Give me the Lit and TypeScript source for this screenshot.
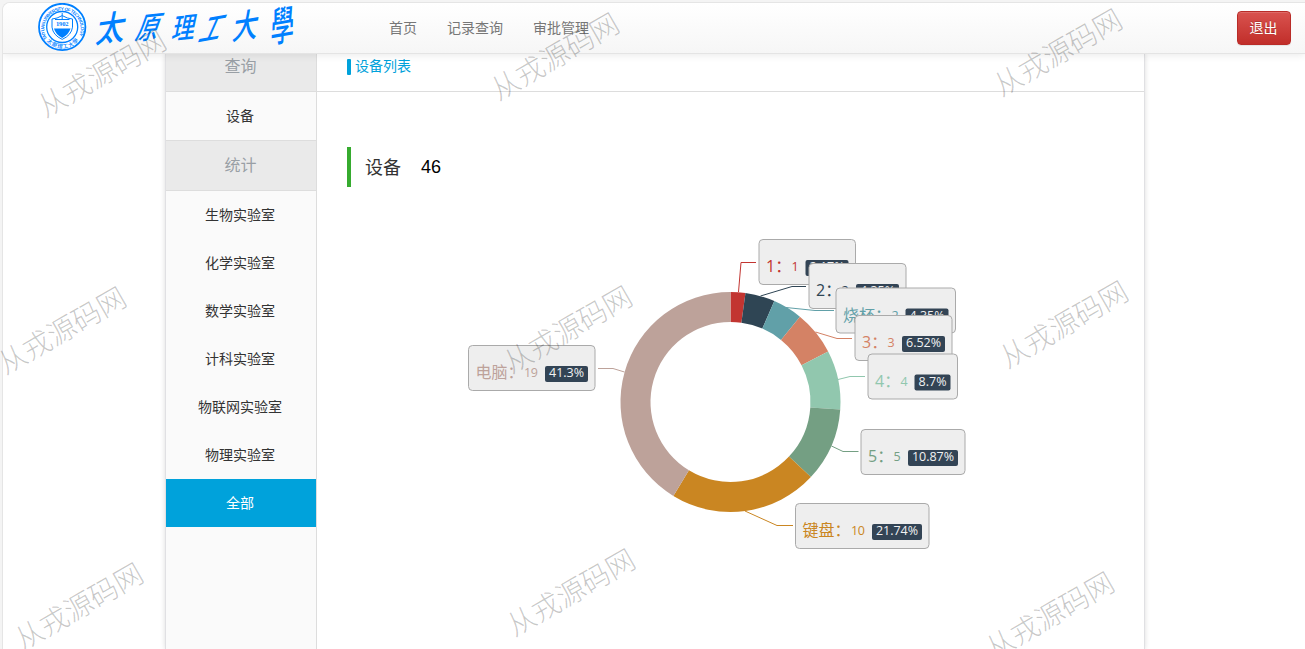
import { LitElement, html, svg, css } from "lit";
import { customElement } from "lit/decorators.js";
import { classMap } from "lit/directives/class-map.js";

interface Slice {
  name: string;
  value: number;
  pct: string;
  color: string;
  box: [number, number, number];
  badge: number;
  line: string;
}

const SLICES: Slice[] = [
  { name: "1", value: 1, pct: "2.17%", color: "#c23531", box: [759, 239.5, 96.5], badge: 43, line: "738.5,292 741,262.5 756,262.5" },
  { name: "2", value: 2, pct: "4.35%", color: "#2f4554", box: [809, 263.5, 97], badge: 43, line: "760.5,296 792,286.5 806,286.5" },
  { name: "烧杯", value: 2, pct: "4.35%", color: "#61a0a8", box: [836, 288, 119.5], badge: 43, line: "786,307.5 815,310.5 834,310.5" },
  { name: "3", value: 3, pct: "6.52%", color: "#d48265", box: [855, 315.5, 97], badge: 43, line: "815.5,332 837,338.5 852,338.5" },
  { name: "4", value: 4, pct: "8.7%", color: "#91c7ae", box: [868, 354, 89.5], badge: 36, line: "838,379.5 850,376.5 865,376.5" },
  { name: "5", value: 5, pct: "10.87%", color: "#749f83", box: [861, 429.5, 104], badge: 50, line: "831.5,446 843,451.5 858.5,451.5" },
  { name: "键盘", value: 10, pct: "21.74%", color: "#ca8622", box: [795.5, 503.5, 133.5], badge: 50, line: "745,511 777,525.5 793,525.5" },
  { name: "电脑", value: 19, pct: "41.3%", color: "#bda29a", box: [468.5, 345.5, 126.5], badge: 43, line: "624.5,372 613,368.5 598,368.5" },
];

const TOTAL = SLICES.reduce((sum, s) => sum + s.value, 0);
const CX = 730.5;
const CY = 402;

function arcPath(from: number, to: number, outer: number, inner: number): string {
  const point = (t: number, r: number) => {
    const a = t * Math.PI * 2;
    return `${(CX + Math.sin(a) * r).toFixed(2)} ${(CY - Math.cos(a) * r).toFixed(2)}`;
  };
  const large = to - from > 0.5 ? 1 : 0;
  return `M${point(from, outer)}A${outer} ${outer} 0 ${large} 1 ${point(to, outer)}L${point(to, inner)}A${inner} ${inner} 0 ${large} 0 ${point(from, inner)}Z`;
}

@customElement("donut-chart")
class DonutChart extends LitElement {
  static styles = css`
    :host { display: block; }
    svg { display: block; }
    text { font-family: "Open Sans", "Noto Sans CJK SC", sans-serif; }
    .name { font-size: 16px; }
    .value { font-size: 12.5px; }
    .pct { font-size: 12.5px; font-weight: 500; fill: #f2f2f2; }
  `;

  render() {
    let sum = 0;
    return html`<svg width="827" height="462" viewBox="317 187 827 462">
      ${SLICES.map((s) => {
        const from = sum / TOTAL;
        sum += s.value;
        return svg`<path d=${arcPath(from, sum / TOTAL, 110, 80)} fill=${s.color}></path>`;
      })}
      ${SLICES.map((s) => svg`<polyline points=${s.line} fill="none" stroke=${s.color}></polyline>`)}
      ${SLICES.map((s) => {
        const [x, y, w] = s.box;
        const badgeX = x + w - 7 - s.badge;
        const digits = String(s.value).length;
        const nameEnd = x + 7.5 + (s.name.length === 2 ? 48 : 25);
        return svg`
          <rect x=${x} y=${y} width=${w} height="45" rx="4" fill="#eee" stroke="#aaa"></rect>
          <text class="name" x=${x + 7} y=${y + 32.5} fill=${s.color}>${s.name + "\uff1a"}</text>
          <text class="value" x=${nameEnd} y=${y + 31.5} fill=${s.color} textLength=${digits * 7}>${s.value}</text>
          <rect x=${badgeX} y=${y + 20.5} width=${s.badge} height="16" rx="2" fill="#334455"></rect>
          <text class="pct" x=${badgeX + 4} y=${y + 31.5} textLength=${s.badge - 8}>${s.pct}</text>`;
      })}
    </svg>`;
  }
}

@customElement("school-logo")
class SchoolLogo extends LitElement {
  static styles = css`
    :host { display: block; }
    svg { display: block; }
    .ring { font: 700 4.6px "Liberation Sans", sans-serif; fill: #0080ff; }
    .cn { font: 500 5.5px "Noto Sans CJK SC", sans-serif; fill: #0080ff; }
    .year { font: 700 6.5px "Liberation Serif", serif; fill: #0080ff; }
    .brush { font-family: "Noto Sans CJK SC", sans-serif; font-weight: 500; fill: #0080ff; }
  `;

  render() {
    const strokes: [string, number, number, string, number][] = [
      ["太", 111.5, 28, "rotate(-8) skewX(-18) scale(.86 1)", 34],
      ["原", 149.5, 27, "rotate(-6) skewX(-26) scale(.74 .96)", 31],
      ["理", 184.5, 27.5, "rotate(-6) skewX(-18) scale(.8 .98)", 29],
      ["工", 213, 28, "rotate(-10) skewX(-34) scale(.7 .96)", 31],
      ["大", 246, 25.5, "rotate(-9) skewX(-18) scale(.8 1.02)", 32],
      ["學", 282.5, 25.5, "rotate(-10) skewX(-12) scale(.7 1.18)", 34],
    ];
    return html`<svg width="265" height="50" viewBox="35 3 265 50">
      <defs>
        <path id="top" d="M47.2 38.8A18.3 18.3 0 1 1 77.8 38.8"></path>
        <path id="bottom" d="M45.4 39.8A21 21 0 0 0 79.2 39.8"></path>
      </defs>
      <circle cx="62.2" cy="27" r="23.2" fill="#fff" stroke="#0080ff" stroke-width="1.8"></circle>
      <circle cx="62.2" cy="27" r="15.5" fill="none" stroke="#0080ff" stroke-width="1.3"></circle>
      <text class="ring" textLength="75"><textPath href="#top" textLength="75">TAIYUAN UNIVERSITY OF TECHNOLOGY</textPath></text>
      <text class="cn"><textPath href="#bottom" startOffset="2" textLength="36">太原理工大學</textPath></text>
      <path d="M52 19q5-.3 10.2-3.4q5.2 3.1 10.3 3.4v8.2q-1 8-10.3 12.2q-9.2-4.2-10.2-12.2z" fill="#fff" stroke="#0080ff"></path>
      <path d="M54 28.5h16.5q-1.6 6-8.3 9.4q-6.700-3.400-8.200-9.400z" fill="#0080ff"></path>
      <path d="M62.2 13v6M55 19.500h14.500" stroke="#0080ff"></path>
      <text class="year" x="56" y="26" textLength="12.5">1902</text>
      ${strokes.map(([ch, x, y, t, size]) => svg`<text class="brush" font-size=${size} text-anchor="middle" y=${size * 0.37} transform="translate(${x} ${y}) ${t}">${ch}</text>`)}
    </svg>`;
  }
}

@customElement("app-root")
class AppRoot extends LitElement {
  static styles = css`
    :host {
      display: block;
      position: relative;
      box-sizing: border-box;
      height: 649px;
      padding: 2px 0 0 2px;
      overflow: hidden;
      background: #f4f4f4;
      font: 14px "Liberation Sans", "Noto Sans CJK SC", sans-serif;
      color: #333;
    }
    .page {
      display: flex;
      flex-direction: column;
      box-sizing: border-box;
      height: 647px;
      border: 1px solid #e5e5e5;
      border-width: 1px 0 0 1px;
      border-top-left-radius: 8px;
      background: #fff;
      overflow: hidden;
    }
    .header {
      position: relative;
      z-index: 1;
      display: flex;
      align-items: center;
      box-sizing: border-box;
      height: 51px;
      flex: none;
      padding: 0 14px 0 32px;
      background: linear-gradient(#fff, #f6f6f6);
      border-bottom: 1px solid #e4e4e4;
      box-shadow: 0 1px 8px rgba(0, 0, 0, .09);
    }
    .nav { display: flex; flex: 1; gap: 30px; padding: 0 0 2px 89px; color: #777; }
    .exit {
      box-sizing: border-box;
      width: 54px;
      height: 34px;
      border: 1px solid #b92c28;
      border-radius: 4px;
      background: linear-gradient(#d9534f, #c12e2a);
      color: #fff;
      font: inherit;
      padding: 0 1px 2px 0;
      text-shadow: 0 -1px 0 rgba(0, 0, 0, .2);
      box-shadow: inset 0 1px 0 rgba(255, 255, 255, .15), 0 1px 1px rgba(0, 0, 0, .075);
    }
    .body {
      display: flex;
      flex: 1;
      min-height: 0;
      width: 978px;
      margin-left: 162px;
      border: 1px solid #e0e0e3;
      border-width: 0 1px;
      box-shadow: 0 0 5px rgba(0, 0, 0, .14);
    }
    .side { width: 150px; flex: none; background: #fafafa; border-right: 1px solid #ddd; text-align: center; }
    .group { box-sizing: border-box; height: 51px; line-height: 50px; padding-right: 1px; font-size: 16px; color: #999fa5; background: #eaeaea; border: 1px solid #ddd; border-width: 1px 0; }
    .first { height: 38px; line-height: 26px; border-top: 0; }
    .item { box-sizing: border-box; height: 48px; line-height: 48px; padding-right: 2px; }
    .active { background: #00a2db; color: #fff; }
    .content { flex: 1; min-width: 0; }
    .title { display: flex; align-items: center; gap: 5px; box-sizing: border-box; height: 38px; padding: 0 0 12px 30px; border-bottom: 1px solid #ddd; color: #00a2db; line-height: 20px; }
    .title span { padding-bottom: 2px; margin-left: -1px; }
    .tick { width: 4px; height: 16px; border-radius: 1px; background: #00a2db; }
    .count { display: flex; align-items: center; gap: 20px; box-sizing: border-box; height: 40px; margin: 55px 0 0 30px; padding-left: 14px; border-left: 4px solid #36ab2f; font-size: 18px; }
    .label { padding-bottom: 2px; }
    .number { color: #000; }
    .mark {
      position: absolute;
      z-index: 2;
      width: 150px;
      margin: -22px 0 0 -77px;
      text-align: center;
      font: 300 28.5px/40px "Noto Sans CJK SC", sans-serif;
      color: rgba(0, 0, 0, .22);
      transform: rotate(-30deg);
      pointer-events: none;
      white-space: nowrap;
    }
  `;

  private labs = ["生物实验室", "化学实验室", "数学实验室", "计科实验室", "物联网实验室", "物理实验室", "全部"];
  private marks = [
    [103, 74], [556, 57], [1059, 53],
    [63, 331], [569, 330], [1065, 325],
    [80, 607], [572, 593], [1051, 616],
  ];

  render() {
    return html`
      <div class="page">
        <header class="header">
          <school-logo></school-logo>
          <nav class="nav"><span>首页</span><span>记录查询</span><span>审批管理</span></nav>
          <button class="exit">退出</button>
        </header>
        <div class="body">
          <aside class="side">
            <div class="group first">查询</div>
            <div class="item">设备</div>
            <div class="group">统计</div>
            ${this.labs.map((lab) => html`<div class=${classMap({ item: true, active: lab === "全部" })}>${lab}</div>`)}
          </aside>
          <main class="content">
            <div class="title"><i class="tick"></i><span>设备列表</span></div>
            <div class="count"><span class="label">设备</span><span class="number">46</span></div>
            <donut-chart></donut-chart>
          </main>
        </div>
      </div>
      ${this.marks.map(([x, y]) => html`<div class="mark" style="left:${x}px;top:${y}px">从戎源码网</div>`)}
    `;
  }
}
